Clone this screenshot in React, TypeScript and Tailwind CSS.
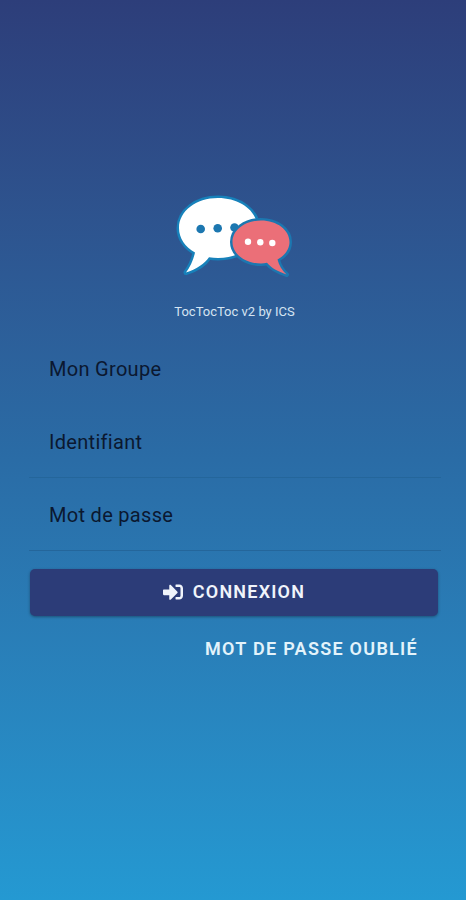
import React from 'react';
import { FaSignInAlt } from 'react-icons/fa';

const Logo: React.FC = () => (
  <svg width="121" height="86" viewBox="174 193 121 86" className="block">
    {/* White bubble */}
    <path
      d="M218 198C240 198 257.500 211 257.500 228C257.500 245 240 258 218 258C215 258 212 257.900 209 257.300C205 263.500 196 269.500 186 272.500C190 267 193.500 260 195 252.500C185 247 179 238 179 228C179 211 196 198 218 198Z"
      fill="#fff"
      stroke="#1781ba"
      strokeWidth="5"
      strokeLinejoin="round"
      paintOrder="stroke"
    />
    <g fill="#1c77b0">
      <circle cx="200.700" cy="229" r="4.300" />
      <circle cx="217.700" cy="228.300" r="4.300" />
      <circle cx="234.500" cy="227.500" r="4.300" />
    </g>

    {/* Red bubble */}
    <path
      d="M261 220.500C277 220.500 289.500 230 289.500 242C289.500 249 285 255.500 277.500 259.500C279 265.500 282 270.500 286.500 274.500C278 271.500 271 268 267 262.800C265 263.300 263 263.500 261 263.500C245 263.500 232.500 254 232.500 242C232.500 230 245 220.500 261 220.500Z"
      fill="#eb6f78"
      stroke="#1c77b0"
      strokeWidth="5"
      strokeLinejoin="round"
      paintOrder="stroke"
    />
    <g fill="#fff">
      <circle cx="248" cy="241.700" r="3.200" />
      <circle cx="260.300" cy="242.300" r="3.200" />
      <circle cx="272.300" cy="243" r="3.200" />
    </g>
  </svg>
);

interface FieldProps {
  label: string;
  bordered?: boolean;
}

const Field: React.FC<FieldProps> = ({ label, bordered = true }) => (
  <div
    className={`flex h-[73px] items-center border-b pl-5 pt-px text-[20px] tracking-[0.3px] text-[#0b1830] ${
      bordered ? 'border-[#24669b]' : 'border-transparent'
    }`}
  >
    {label}
  </div>
);

export default function App() {
  return (
    <div className="flex h-[900px] w-full flex-col bg-linear-to-b from-[#2d3e7a] via-[#2a6ba5] to-[#2499d2] pl-[29px] pr-[25px] pt-[193px] font-['Roboto',sans-serif]">
      <div className="flex w-[411px] flex-col items-center">
        <Logo />
        <p className="mt-6 text-[13px] leading-[18px] text-[#d5e4f2]">TocTocToc v2 by ICS</p>
      </div>

      <form className="mt-[11px]" onSubmit={(e) => e.preventDefault()}>
        <Field label="Mon Groupe" bordered={false} />
        <Field label="Identifiant" />
        <Field label="Mot de passe" />

        <button
          type="submit"
          className="mt-[18px] ml-px flex h-[47px] w-[408px] items-center justify-center gap-2.5 rounded-[5px] bg-[#2c3c78] pb-0.5 text-[18px] font-semibold tracking-[1.2px] text-[#f0f4fb] shadow-[0_1px_3px_rgba(0,0,0,0.35)]"
        >
          <FaSignInAlt className="h-5 w-5" />
          CONNEXION
        </button>

        <div className="mt-[21px] flex justify-end pr-[23px]">
          <button type="button" className="text-[18px] leading-6 font-semibold tracking-[1.28px] text-[#e3f3fb]">
            MOT DE PASSE OUBLIÉ
          </button>
        </div>
      </form>
    </div>
  );
}
